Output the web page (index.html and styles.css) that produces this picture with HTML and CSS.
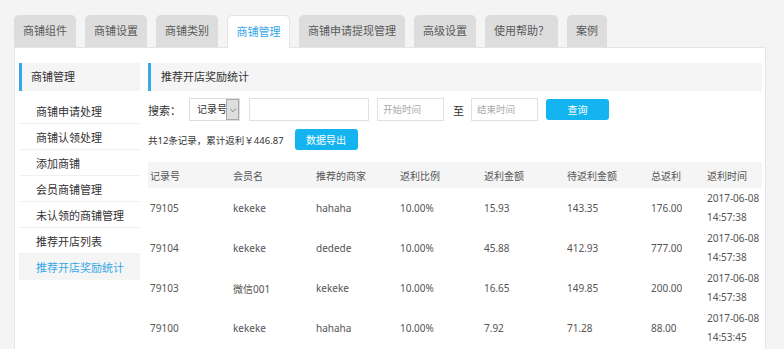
FILE: index.html
```html
<!DOCTYPE html>
<html lang="zh-CN">
<head>
    <meta charset="UTF-8">
    <meta name="viewport" content="width=device-width, initial-scale=1.0">
    <title>推荐开店奖励统计</title>
    <link rel="stylesheet" href="styles.css">
</head>
<body>
    <div class="tabs">
        <div class="tab">商铺组件</div>
        <div class="tab">商铺设置</div>
        <div class="tab">商铺类别</div>
        <div class="tab active">商铺管理</div>
        <div class="tab">商铺申请提现管理</div>
        <div class="tab">高级设置</div>
        <div class="tab">使用帮助？</div>
        <div class="tab">案例</div>
    </div>
    <div class="panel">
        <div class="sidebar">
            <div class="box-title">商铺管理</div>
            <ul class="side-menu">
                <li>商铺申请处理</li>
                <li>商铺认领处理</li>
                <li>添加商铺</li>
                <li>会员商铺管理</li>
                <li>未认领的商铺管理</li>
                <li>推荐开店列表</li>
                <li class="current">推荐开店奖励统计</li>
            </ul>
        </div>
        <div class="main">
            <div class="box-title">推荐开店奖励统计</div>
            <div class="search-row">
                <span class="label">搜索：</span>
                <div class="select-box">
                    <span class="select-text">记录号</span>
                    <span class="select-arrow">
                        <svg viewBox="0 0 10 10" width="8" height="8"><polyline points="1.5,3.5 5,7 8.5,3.5" fill="none" stroke="#666" stroke-width="1"/></svg>
                    </span>
                </div>
                <input type="text" class="text-input">
                <input type="text" class="date-input" placeholder="开始时间">
                <span class="label to">至</span>
                <input type="text" class="date-input end" placeholder="结束时间">
                <button class="btn btn-search">查询</button>
            </div>
            <div class="summary-row">
                <span>共12条记录，累计返利￥446.87</span>
                <button class="btn btn-export">数据导出</button>
            </div>
            <table class="data-table">
                <colgroup>
                    <col style="width:83px"><col style="width:83px"><col style="width:84px"><col style="width:84px">
                    <col style="width:83px"><col style="width:84px"><col style="width:56px"><col style="width:57px">
                </colgroup>
                <thead>
                    <tr>
                        <th>记录号</th><th>会员名</th><th>推荐的商家</th><th>返利比例</th>
                        <th>返利金额</th><th>待返利金额</th><th>总返利</th><th>返利时间</th>
                    </tr>
                </thead>
                <tbody>
                    <tr>
                        <td>79105</td><td>kekeke</td><td>hahaha</td><td>10.00%</td>
                        <td>15.93</td><td>143.35</td><td>176.00</td><td class="time">2017-06-08<br>14:57:38</td>
                    </tr>
                    <tr>
                        <td>79104</td><td>kekeke</td><td>dedede</td><td>10.00%</td>
                        <td>45.88</td><td>412.93</td><td>777.00</td><td class="time">2017-06-08<br>14:57:38</td>
                    </tr>
                    <tr>
                        <td>79103</td><td>微信001</td><td>kekeke</td><td>10.00%</td>
                        <td>16.65</td><td>149.85</td><td>200.00</td><td class="time">2017-06-08<br>14:57:38</td>
                    </tr>
                    <tr>
                        <td>79100</td><td>kekeke</td><td>hahaha</td><td>10.00%</td>
                        <td>7.92</td><td>71.28</td><td>88.00</td><td class="time">2017-06-08<br>14:53:45</td>
                    </tr>
                </tbody>
            </table>
        </div>
    </div>
</body>
</html>
```

FILE: styles.css
```css
:root {
    --blue: #35a8e8;
    --btn-blue: #14b4f0;
    --light-bg: #f5f5f5;
    --line: #e4e4e4;
    --text: #333;
    --text-soft: #555;
}
body, html { margin: 0; padding: 0; height: 100%; overflow: hidden; }
body { background: #f4f4f4; font-family: "Noto Sans", "Noto Sans CJK SC", sans-serif; color: var(--text); }

.tabs { display: flex; gap: 9px; padding: 15px 0 0 14px; margin-bottom: -1px; }
.tab { height: 32px; line-height: 32px; padding: 0 9px; background: #dddddd; color: #5a5a5a; font-size: 11px; border-radius: 5px 5px 0 0; white-space: nowrap; }
.tab.active { position: relative; height: 33px; box-sizing: border-box; background: #fff; color: var(--blue); border: 1px solid var(--line); border-bottom: none; padding: 0 8.5px; line-height: 31px; }

.panel { display: flex; gap: 8px; margin-left: 14px; width: 752px; height: 303px; box-sizing: border-box; background: #fff; border: 1px solid var(--line); border-bottom: none; padding: 15px 0 0 4px; }

.box-title { height: 28px; line-height: 28px; background: var(--light-bg); border-left: 3px solid var(--blue); font-size: 11px; color: var(--text); }

.sidebar { width: 121px; flex-shrink: 0; }
.sidebar .box-title { padding-left: 9px; }
.side-menu { list-style: none; margin: 7px 0 0; padding: 0; }
.side-menu li { height: 26px; line-height: 27px; box-sizing: border-box; border-bottom: 1px solid #f1f1f1; padding-left: 17px; font-size: 11px; color: var(--text); white-space: nowrap; }
.side-menu li.current { color: var(--blue); background: var(--light-bg); border-bottom: none; }

.main { width: 614px; flex-shrink: 0; }
.main .box-title { padding-left: 10px; }

.search-row { display: flex; align-items: center; height: 23px; margin-top: 7px; }
.label { font-size: 11px; color: var(--text); }
.select-box { display: flex; align-items: stretch; width: 51px; height: 23px; box-sizing: border-box; border: 1px solid #dcdcdc; margin-left: 8px; font-size: 10px; }
.select-text { flex: 1; min-width: 0; line-height: 21px; padding-left: 7px; white-space: nowrap; }
.select-arrow { width: 13px; flex-shrink: 0; display: flex; align-items: center; justify-content: center; background: #dedede; border: 1px solid #a9a9a9; box-sizing: border-box; }
input { height: 23px; box-sizing: border-box; border: 1px solid #e1e1e1; padding: 0 5px; font-family: inherit; font-size: 9.5px; outline: none; }
input::placeholder { color: #aaa; }
.text-input { width: 120px; margin-left: 9px; }
.date-input { width: 67px; margin-left: 8px; }
.to { margin-left: 9px; }
.date-input.end { margin-left: 7px; }

.btn { width: 63px; height: 21px; border: none; border-radius: 3px; background: var(--btn-blue); color: #fff; font-family: inherit; font-size: 10px; padding: 0; cursor: pointer; }
.btn-search { margin-left: 8px; }

.summary-row { display: flex; align-items: center; height: 21px; margin-top: 8px; font-size: 9.5px; color: var(--text); }
.btn-export { margin-left: 11px; }

.data-table { width: 614px; table-layout: fixed; border-collapse: collapse; margin-top: 12px; font-size: 10px; color: var(--text-soft); }
.data-table th { height: 26px; background: var(--light-bg); font-weight: normal; text-align: left; padding: 0 0 0 2px; }
.data-table td { height: 40px; padding: 0 0 0 2px; white-space: nowrap; }
.data-table td.time { line-height: 19px; }
```
